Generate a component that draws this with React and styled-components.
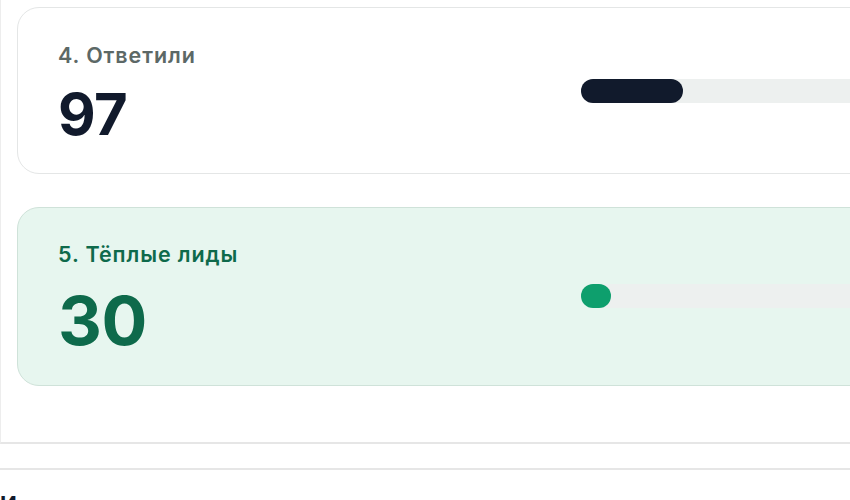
import React from 'react';
import styled, { createGlobalStyle } from 'styled-components';

const GlobalStyle = createGlobalStyle`
  html, body {
    margin: 0;
    padding: 0;
    background: #ffffff;
    overflow: hidden;
  }
  body {
    font-family: Inter, "Noto Sans", "Liberation Sans", sans-serif;
  }
`

const stages = [
  { id: 4, title: 'Ответили', value: 97, percent: 23.5, accent: false },
  { id: 5, title: 'Тёплые лиды', value: 30, percent: 3, accent: true },
]

export default function App() {
  return (
    <Page>
      <GlobalStyle />
      <Panel>
        {stages.map((stage) =>
          <Card key={stage.id} $accent={stage.accent}>
            <Info $accent={stage.accent}>
              <Label $accent={stage.accent}>{stage.id}. {stage.title}</Label>
              <Value $accent={stage.accent}>{stage.value}</Value>
            </Info>
            <Track>
              <Fill $accent={stage.accent} style={{ width: `${stage.percent}%` }} />
            </Track>
          </Card>
        )}
      </Panel>
      <Spacer />
      <Heading>Источники и конверсия по каналам</Heading>
    </Page>
  )
}

const Page = styled.div`
  width: 1100px;
  height: 500px;
  overflow: hidden;
`
const Panel = styled.div`
  display: flex;
  flex-direction: column;
  gap: 33px;
  padding: 7px 0 56px 16px;
  border-left: 1px solid #ededed;
  border-bottom: 2px solid #e6e6e6;
`
const Card = styled.div`
  display: grid;
  grid-template-columns: 523px 1fr;
  align-items: center;
  width: 1000px;
  box-sizing: border-box;
  padding: ${p => p.$accent ? '34px 0 31px 40px' : '35px 0 30px 40px'};
  border: 1.5px solid ${p => p.$accent ? '#cfe2d9' : '#e4e6e6'};
  border-radius: 22px;
  background: ${p => p.$accent ? '#e7f6ef' : '#ffffff'};
`
const Info = styled.div`
  display: flex;
  flex-direction: column;
  gap: ${p => p.$accent ? '20px' : '18px'};
`
const Label = styled.div`
  font-size: 21.5px;
  line-height: 24px;
  font-weight: 600;
  letter-spacing: 0.9px;
  color: ${p => p.$accent ? '#0e6a4b' : '#5c6866'};
`
const Value = styled.div`
  font-size: ${p => p.$accent ? '68px' : '58px'};
  line-height: 1;
  font-weight: 700;
  letter-spacing: -0.5px;
  color: ${p => p.$accent ? '#0e6a4b' : '#111a2c'};
`
const Track = styled.div`
  height: 24px;
  margin-bottom: 4px;
  background: #edf0ef;
  border-radius: 12px 0 0 12px;
`
const Fill = styled.div`
  height: 100%;
  min-width: 30px;
  border-radius: 12px;
  background: ${p => p.$accent ? '#0e9f6d' : '#111a2c'};
`
const Spacer = styled.div`
  height: 24px;
  border-bottom: 2px solid #e6e6e6;
`
const Heading = styled.div`
  margin-top: 21px;
  font-size: 22px;
  font-weight: 700;
  color: #111a2c;
`
